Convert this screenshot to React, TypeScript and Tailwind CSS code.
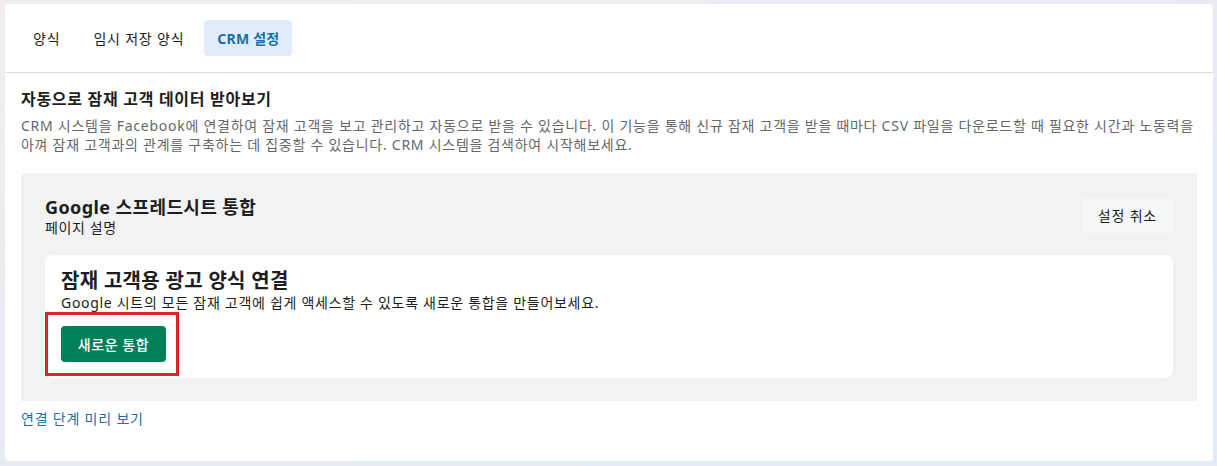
export default function App() {
  const font = { fontFamily: '"Noto Sans", "Noto Sans CJK KR", sans-serif' };
  return (
    <div
      className="w-[1217px] h-[466px] bg-gradient-to-br from-[#f1edef] via-[#e9ebf3] to-[#e2ebf6] pt-[4px] pl-[5px] pr-[4px] pb-[5px]"
      style={font}
    >
      <div className="w-[1208px] h-[457px] bg-white rounded-[4px] flex flex-col">
        <div className="flex gap-[7px] px-[15px] pt-[16px] pb-[16px] border-b border-[#dadde1]">
          <div className="h-[36px] px-[13px] flex items-center text-[14px] tracking-[0.8px] text-[#1c1e21] rounded-[4px]">양식</div>
          <div className="h-[36px] px-[13px] flex items-center text-[14px] tracking-[0.8px] text-[#1c1e21] rounded-[4px]">임시 저장 양식</div>
          <div className="h-[36px] px-[13px] flex items-center text-[14px] tracking-[0.2px] font-bold text-[#1a6fa8] bg-[#e0edf8] rounded-[4px]">CRM 설정</div>
        </div>
        <div className="px-[16px] pt-[15px]">
          <div className="text-[16px] font-bold text-[#1c1e21] leading-[22px] tracking-[0.7px]">자동으로 잠재 고객 데이터 받아보기</div>
          <div className="mt-[6px] text-[14px] text-[#65676b] leading-[19px] tracking-[0.74px] whitespace-nowrap">
            CRM 시스템을 Facebook에 연결하여 잠재 고객을 보고 관리하고 자동으로 받을 수 있습니다. 이 기능을 통해 신규 잠재 고객을 받을 때마다 CSV 파일을 다운로드할 때 필요한 시간과 노동력을
            <br />
            아껴 잠재 고객과의 관계를 구축하는 데 집중할 수 있습니다. CRM 시스템을 검색하여 시작해보세요.
          </div>
          <div className="mt-[19px] bg-[#f2f2f2] px-[24px] pt-[22px] pb-[23px] w-[1176px]">
            <div className="flex items-start justify-between">
              <div>
                <div className="text-[18px] font-bold text-[#1c1e21] leading-[24px] tracking-[0.4px]">Google 스프레드시트 통합</div>
                <div className="text-[14px] text-[#1c1e21] leading-[18px] tracking-[0.6px]">페이지 설명</div>
              </div>
              <div className="mt-[3px] h-[35px] px-[16px] flex items-center bg-[#f5f7f9] rounded-[4px] text-[14px] tracking-[0.8px] text-[#1c1e21]">설정 취소</div>
            </div>
            <div className="mt-[18px] bg-white rounded-[8px] px-[16px] pt-[15px] pb-[2px]">
              <div className="text-[20px] font-bold text-[#1c1e21] leading-[22px] tracking-[0.3px]">잠재 고객용 광고 양식 연결</div>
              <div className="text-[14px] text-[#1c1e21] leading-[19px] tracking-[0.7px] mt-[1px]">Google 시트의 모든 잠재 고객에 쉽게 액세스할 수 있도록 새로운 통합을 만들어보세요.</div>
              <div className="-ml-[16px] w-[134px] h-[64px] border-[3px] border-[#d9232b] flex items-center pl-[13px]">
                <div className="h-[36px] w-[105px] bg-[#007f5a] rounded-[4px] flex items-center justify-center text-[14px] tracking-[0.6px] text-white font-medium">새로운 통합</div>
              </div>
            </div>
          </div>
          <div className="mt-[8px] text-[14px] text-[#216fa8] leading-[20px] tracking-[0.8px]">연결 단계 미리 보기</div>
        </div>
      </div>
    </div>
  );
}
